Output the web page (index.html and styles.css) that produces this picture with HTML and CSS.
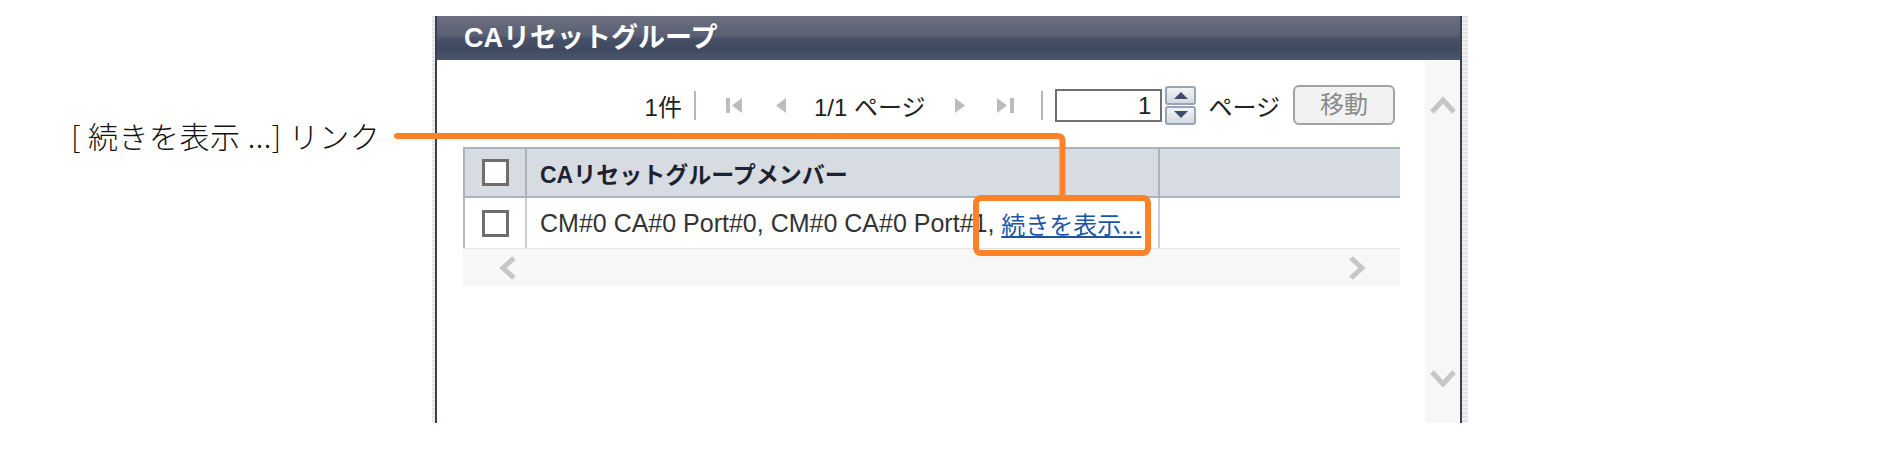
FILE: index.html
```html
<!DOCTYPE html>
<html lang="ja">
<head>
    <meta charset="UTF-8">
    <title>CAリセットグループ</title>
    <link rel="stylesheet" href="styles.css">
</head>
<body>
    <div class="figure">
        <div class="label-col">
            <span class="callout-label">[ 続きを表示 ...] リンク</span>
        </div>

        <div class="panel-frame">
            <div class="panel">
                <div class="panel-title">CAリセットグループ</div>
                <div class="panel-body">
                    <div class="main">
                        <div class="pager">
                            <span class="count">1件</span>
                            <span class="sep"></span>
                            <svg class="nav first" width="16" height="17" viewBox="0 0 16 17"><rect x="0" y="1" width="4" height="15"/><polygon points="16,1 16,16 6,8.5"/></svg>
                            <svg class="nav prev" width="11" height="17" viewBox="0 0 11 17"><polygon points="11,1 11,16 1,8.5"/></svg>
                            <span class="pages">1/1 ページ</span>
                            <svg class="nav next" width="11" height="17" viewBox="0 0 11 17"><polygon points="0,1 0,16 10,8.5"/></svg>
                            <svg class="nav last" width="18" height="17" viewBox="0 0 18 17"><polygon points="0,1 0,16 10,8.5"/><rect x="13" y="1" width="4" height="15"/></svg>
                            <span class="sep sep-b"></span>
                            <div class="page-input">1</div>
                            <div class="spinner">
                                <span class="spin"><svg width="14" height="8" viewBox="0 0 14 8"><polygon points="0,8 14,8 7,1"/></svg></span>
                                <span class="spin"><svg width="14" height="8" viewBox="0 0 14 8"><polygon points="0,0 14,0 7,7"/></svg></span>
                            </div>
                            <span class="page-word">ページ</span>
                            <span class="go-btn">移動</span>
                        </div>

                        <div class="grid">
                            <div class="grid-row grid-head">
                                <div class="cell cell-check"><span class="check"></span></div>
                                <div class="cell cell-text">CAリセットグループメンバー</div>
                                <div class="cell"></div>
                            </div>
                            <div class="grid-row grid-body">
                                <div class="cell cell-check"><span class="check"></span></div>
                                <div class="cell cell-text">CM#0 CA#0 Port#0, CM#0 CA#0 Port#1,&nbsp;<a href="#" class="more">続きを表示...</a></div>
                                <div class="cell"></div>
                            </div>
                            <div class="hscroll">
                                <svg width="18" height="24" viewBox="0 0 18 24"><polyline points="15,2 4,12 15,22"/></svg>
                                <svg width="18" height="24" viewBox="0 0 18 24"><polyline points="3,2 14,12 3,22"/></svg>
                            </div>
                        </div>
                    </div>

                    <div class="vscroll">
                        <svg width="26" height="20" viewBox="0 0 26 20"><polyline points="2,17 13,5 24,17"/></svg>
                        <svg width="26" height="20" viewBox="0 0 26 20"><polyline points="2,3 13,15 24,3"/></svg>
                    </div>
                </div>
            </div>
        </div>

        <!-- callout drawn over the screenshot -->
        <svg class="callout" width="1890" height="449" viewBox="0 0 1890 449">
            <path d="M 397 136 H 1057 Q 1062.5 136 1062.5 141 V 197"/>
            <rect x="976" y="198" width="172" height="55" rx="5"/>
        </svg>
    </div>
</body>
</html>
```

FILE: styles.css
```css
body {
    margin: 0;
    background-color: #fff;
    font-family: "Liberation Sans", "Noto Sans CJK JP", sans-serif;
    color: #222;
}
.figure {
    position: relative;
    display: flex;
    align-items: flex-start;
    padding-top: 16px;
    height: 433px;
}
.label-col {
    width: 432px;
    flex-shrink: 0;
    padding: 99px 0 0 71px;
    box-sizing: border-box;
}
.callout-label {
    font-family: "Noto Sans CJK JP", sans-serif;
    font-weight: 300;
    font-size: 30px;
    line-height: 40px;
    letter-spacing: 0.5px;
    color: #111;
    white-space: nowrap;
}
.panel-frame {
    width: 1036px;
    height: 407px;
    padding: 0 6px 0 3px;
    box-sizing: border-box;
    background: repeating-linear-gradient(to bottom, #e2e2e2 0 2px, #f0f0f0 2px 4px);
}
.panel {
    height: 100%;
    display: flex;
    flex-direction: column;
    border-left: 2px solid #3a4152;
    border-right: 2px solid #3a4152;
    background-color: #fff;
}
.panel-title {
    height: 44px;
    line-height: 44px;
    padding-left: 27px;
    font-size: 27px;
    font-weight: bold;
    color: #fff;
    background: linear-gradient(to bottom, #6c7080 0%, #5a6072 45%, #465066 52%, #3f4960 75%, #4c566c 100%);
}
.panel-body {
    flex: 1;
    display: flex;
}
.main {
    flex: 1;
    padding: 25px 25px 0 26px;
}
.pager {
    display: flex;
    align-items: center;
    justify-content: flex-end;
    height: 40px;
    padding-right: 5px;
    font-size: 24px;
    color: #222;
}
.sep {
    width: 2px;
    height: 29px;
    margin-left: 12px;
    background-color: #b0b8c2;
}
.nav {
    fill: #bcbcbc;
}
.first { margin-left: 30px; }
.prev { margin-left: 33px; }
.pages { margin-left: 28px; }
.next { margin-left: 30px; }
.last { margin-left: 31px; }
.sep-b { margin-left: 26px; }
.page-input {
    width: 107px;
    height: 33px;
    margin-left: 12px;
    box-sizing: border-box;
    border: 2px solid #707070;
    text-align: right;
    padding-right: 9px;
    line-height: 29px;
    font-size: 24px;
}
.spinner {
    display: flex;
    flex-direction: column;
    gap: 1px;
    margin-left: 3px;
}
.spin {
    display: flex;
    align-items: center;
    justify-content: center;
    width: 31px;
    height: 19px;
    box-sizing: border-box;
    border: 2px solid #98a4b8;
    border-radius: 3px;
    background: linear-gradient(to bottom, #f2f4f7, #d3d9e2);
}
.spin svg {
    fill: #3e4b6a;
}
.page-word {
    margin-left: 12px;
}
.go-btn {
    margin-left: 13px;
    width: 102px;
    height: 40px;
    box-sizing: border-box;
    border: 2px solid #a2a2a2;
    border-radius: 6px;
    background-color: #f2f2f2;
    color: #8a8a8a;
    text-align: center;
    line-height: 36px;
    font-size: 24px;
}
.grid {
    margin-top: 22px;
    width: 937px;
}
.grid-row {
    display: grid;
    grid-template-columns: 62px 633px 1fr;
    height: 51px;
    box-sizing: border-box;
}
.grid-head {
    background-color: #d7dce3;
    border-top: 2px solid #aab3bf;
    border-bottom: 2px solid #aab3bf;
}
.grid-body {
    border-bottom: 1px solid #e6e6e6;
}
.cell {
    display: flex;
    align-items: center;
    border-left: 2px solid #aab3bf;
    white-space: nowrap;
    overflow: hidden;
}
.grid-body .cell {
    border-left-color: #c6cdd7;
}
.grid-body .cell-check {
    border-left-color: #b2bac6;
}
.cell-check {
    justify-content: center;
}
.cell-text {
    padding-left: 13px;
}
.grid-head .cell-text {
    font-size: 23px;
    font-weight: bold;
    color: #1e2230;
}
.grid-body .cell-text {
    font-size: 25px;
    color: #333;
}
.check {
    width: 27px;
    height: 27px;
    box-sizing: border-box;
    border: 3px solid #6e6e6e;
    background-color: #fff;
}
.more {
    font-size: 24px;
    color: #1b56a6;
    text-decoration: underline;
}
.hscroll {
    height: 37px;
    display: flex;
    align-items: center;
    justify-content: space-between;
    padding: 0 34px 0 36px;
    background-color: #f7f7f7;
}
.hscroll svg, .vscroll svg {
    fill: none;
    stroke: #c6c6c6;
    stroke-width: 5;
}
.vscroll {
    width: 35px;
    display: flex;
    flex-direction: column;
    align-items: center;
    justify-content: space-between;
    padding: 35px 0 34px;
    background-color: #f7f7f7;
}
.callout {
    position: absolute;
    left: 0;
    top: 0;
    pointer-events: none;
}
.callout path, .callout rect {
    fill: none;
    stroke: #ff8228;
    stroke-width: 6;
    stroke-linecap: round;
    stroke-linejoin: round;
}
```
